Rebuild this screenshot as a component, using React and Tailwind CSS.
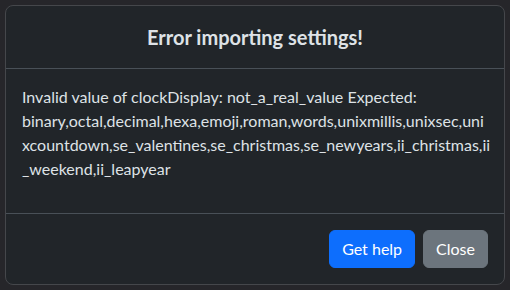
import React from 'react';

export default function App() {
  return (
    <div className="w-[510px] h-[290px] bg-[#26262a] p-[5px] font-['Lato',sans-serif] text-[#dee2e6]">
      <div className="flex flex-col rounded-lg border border-[#45474b] bg-[#212529]">
        {/* Header */}
        <div className="border-b border-[#495057] p-4 text-center">
          <h5 className="text-[20px] leading-[30px] font-bold">Error importing settings!</h5>
        </div>

        {/* Body */}
        <div className="p-4">
          <p className="mb-4 text-base leading-6 whitespace-nowrap">
            Invalid value of clockDisplay: not_a_real_value Expected:
            <br />
            binary,octal,decimal,hexa,emoji,roman,words,unixmillis,unixsec,uni
            <br />
            xcountdown,se_valentines,se_christmas,se_newyears,ii_christmas,ii
            <br />
            _weekend,ii_leapyear
          </p>
        </div>

        {/* Footer */}
        <div className="flex justify-end gap-2 border-t border-[#495057] px-4 py-4">
          <button className="rounded-md border border-[#0d6efd] bg-[#0d6efd] px-3 py-1.5 text-base leading-6 text-white">
            Get help
          </button>
          <button className="rounded-md border border-[#6c757d] bg-[#6c757d] px-3 py-1.5 text-base leading-6 text-white">
            Close
          </button>
        </div>
      </div>
    </div>
  );
}
